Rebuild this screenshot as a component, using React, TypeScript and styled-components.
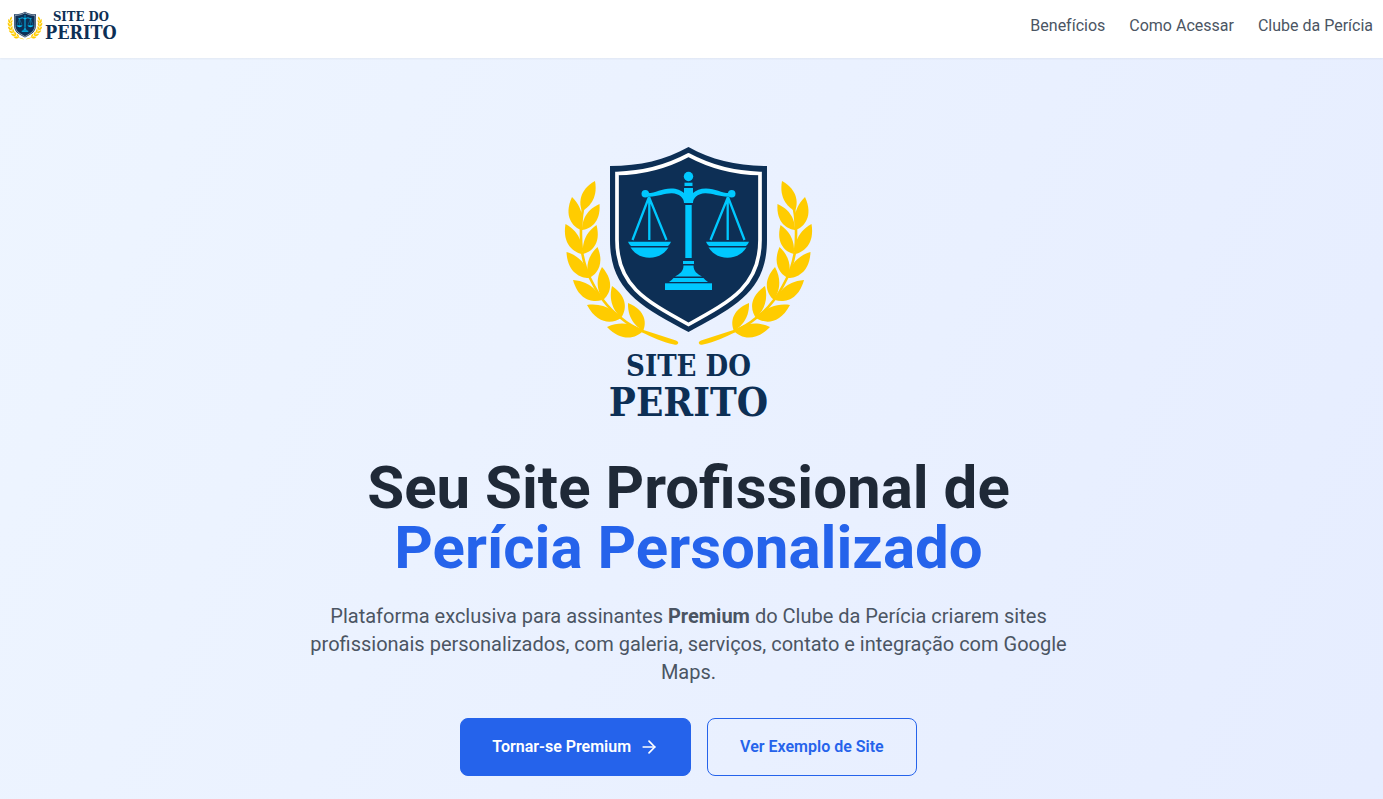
import React from "react";
import styled, { createGlobalStyle } from "styled-components";
import { ArrowRight } from "lucide-react";

const NAVY = "#0d2f55";
const CYAN = "#00c8ff";
const GOLD = "#ffcc00";

const GlobalStyle = createGlobalStyle`
  *, *::before, *::after { box-sizing: border-box; }
  body {
    margin: 0;
    font-family: Roboto, "Liberation Sans", sans-serif;
    font-size: 16px;
    line-height: 24px;
    color: #1f2937;
  }
  h1, p { margin: 0; }
`;

const Page = styled.div`
  min-height: 100vh;
  display: flex;
  flex-direction: column;
`;

const Header = styled.header`
  display: flex;
  align-items: center;
  justify-content: space-between;
  padding: 8px 10px 14px 7px;
  background: #ffffff;
  box-shadow: 0 1px 2px rgba(0, 0, 0, 0.05);
  z-index: 1;
`;

const Brand = styled.a<{ $stacked?: boolean }>`
  display: flex;
  flex-direction: ${(p) => (p.$stacked ? "column" : "row")};
  align-items: center;
  gap: ${(p) => (p.$stacked ? "0" : "2px")};
  color: ${NAVY};
  text-decoration: none;
`;

const Emblem = styled.svg<{ $width: number }>`
  display: block;
  width: ${(p) => p.$width}px;
  height: auto;
`;

const Wordmark = styled.span<{ $large?: boolean }>`
  display: flex;
  flex-direction: column;
  align-items: center;
  padding-bottom: ${(p) => (p.$large ? 0 : 2)}px;
  font-family: "DejaVu Serif Condensed", "Liberation Serif", serif;
  font-weight: 700;
  font-size: ${(p) => (p.$large ? 29 : 13)}px;
  line-height: ${(p) => (p.$large ? 32 : 16)}px;
`;

const WordmarkMain = styled.span<{ $large?: boolean }>`
  font-size: ${(p) => (p.$large ? 40 : 18)}px;
  line-height: ${(p) => (p.$large ? 40 : 16)}px;
`;

const Nav = styled.nav`
  display: flex;
  gap: 24px;
`;

const NavLink = styled.a`
  height: 36px;
  line-height: 36px;
  color: #4b5563;
  text-decoration: none;
`;

const Hero = styled.main`
  flex: 1;
  display: flex;
  flex-direction: column;
  align-items: center;
  padding: 84px 22px 16px 16px;
  text-align: center;
  background: linear-gradient(to bottom right, #eef5ff, #e1e8ff) 0 0 / 100% 3000px no-repeat;
`;

const Title = styled.h1`
  margin-top: 36px;
  font-size: 60px;
  line-height: 60px;
  font-weight: 700;
`;

const Accent = styled.span`
  display: block;
  color: #2563eb;
`;

const Lead = styled.p`
  max-width: 768px;
  margin-top: 24px;
  font-size: 20px;
  line-height: 28px;
  color: #4b5563;
`;

const Actions = styled.div`
  display: flex;
  flex-wrap: wrap;
  justify-content: center;
  gap: 16px;
  margin-top: 32px;
`;

const Button = styled.button<{ $outline?: boolean }>`
  display: inline-flex;
  align-items: center;
  gap: 8px;
  height: 58px;
  padding: 0 ${(p) => (p.$outline ? 32 : 31)}px;
  font: inherit;
  font-weight: 600;
  border: 1px solid #2563eb;
  border-radius: 8px;
  cursor: pointer;
  color: ${(p) => (p.$outline ? "#2563eb" : "#ffffff")};
  background: ${(p) => (p.$outline ? "transparent" : "#2563eb")};
`;

/* bend > 0 bulges the leaf to the right of its base-to-tip axis */
type Leaf = [baseX: number, baseY: number, tipX: number, tipY: number, bend: number];

const LEAVES: Leaf[] = [
  [582, 211, 595, 181, -0.02],
  [581, 230, 572, 197, -0.06],
  [582, 230, 599.5, 204, 0.04],
  [582, 254, 565.5, 224, -0.04],
  [583, 254, 596.5, 225, 0.06],
  [589, 278, 566.5, 252, -0.04],
  [589, 278, 597.5, 247, 0.04],
  [602, 300, 573, 280, -0.06],
  [603, 300, 602, 267, 0.06],
  [621, 318, 587, 305, -0.08],
  [621, 318, 612, 286, 0.06],
  [643, 331, 607, 327, -0.06],
  [643, 331, 628, 303, 0.06],
];

function leafPath([bx, by, tx, ty, bend]: Leaf): string {
  const dx = tx - bx;
  const dy = ty - by;
  const at = (along: number, side: number) =>
    `${(bx + dx * along - dy * side).toFixed(1)} ${(by + dy * along + dx * side).toFixed(1)}`;
  return [
    `M${bx} ${by}`,
    `C${at(0.15, 0.14 + bend)} ${at(0.52, 0.34 + bend)} ${tx} ${ty}`,
    `C${at(0.52, -0.34 + bend)} ${at(0.15, -0.14 + bend)} ${bx} ${by}Z`,
  ].join("");
}

function Branch() {
  return (
    <g fill={GOLD}>
      {LEAVES.map((leaf) => (
        <path key={leaf.join()} d={leafPath(leaf)} />
      ))}
      <path
        d="M584 205C581 216 580 236 582 252C584 263 586 270 590 278C594 286 598 294 603 300C609 308 614 313 621 318C628 324 635 328 643 331"
        fill="none"
        stroke={GOLD}
        strokeWidth="2.6"
      />
      <path d="M642 329.500L676 340.500Q679 342 678 343.500Q677 345.500 674 344.500C662 342 652 337 641 332Z" />
    </g>
  );
}

function ScaleArm() {
  return (
    <g fill={CYAN}>
      <circle cx="645.300" cy="193.700" r="3.800" />
      <path d="M646 193C654 194 661 188.500 671 188.500C677 188.500 681 190.500 684 193H689V203H684C684 198 679 193.500 672 193.300C664 193 657 197.500 646 196.500Z" />
      <path d="M649 197L632.500 240M649 197L666.500 240M649.300 197V240" fill="none" stroke={CYAN} strokeWidth="2.300" />
      <path d="M628 241.700H671Q670 244.500 668 246H631Q629 244.500 628 241.700Z" />
      <path d="M630.500 247.500H668.500C664 254.500 657 257.700 649.500 257.700S635 254.500 630.500 247.500Z" />
    </g>
  );
}

function EmblemArt({ width }: { width: number }) {
  const mirror = "translate(1377 0) scale(-1 1)";
  return (
    <Emblem $width={width} viewBox="560 142 257 208" aria-hidden="true">
      <path
        fill={NAVY}
        d="M688.500 147C665 160 640 166 610 166V240C610 290 640 306 688.500 332C737 306 767 290 767 240V166C737 166 712 160 688.500 147Z"
      />
      <path
        fill="none"
        stroke="#ffffff"
        strokeWidth="3.700"
        d="M688.500 155C666 167 643 173 617 173.500V240C617 285 644 300 688.500 324.500C733 300 760 285 760 240V173.500C734 173 711 167 688.500 155Z"
      />
      <Branch />
      <g transform={mirror}>
        <Branch />
      </g>
      <ScaleArm />
      <g transform={mirror}>
        <ScaleArm />
      </g>
      <g fill={CYAN}>
        <circle cx="688.500" cy="176.500" r="4.700" />
        <rect x="684.500" y="182.700" width="8" height="3.300" />
        <rect x="684" y="188" width="9" height="14.500" />
        <rect x="685.300" y="205" width="6.400" height="53" />
        <rect x="683" y="261" width="11" height="3" />
        <path d="M683.500 265.500H693.500C693.500 271 697 274 702 276.500H675C680 274 683.500 271 683.500 265.500Z" />
        <path d="M673.500 278H703.500Q705 280 708 282H669Q672 280 673.500 278Z" />
        <rect x="665" y="283.300" width="47" height="6.700" />
      </g>
    </Emblem>
  );
}

function Logo({ large }: { large?: boolean }) {
  return (
    <Brand href="#" $stacked={large}>
      <EmblemArt width={large ? 257 : 36} />
      <Wordmark $large={large}>
        <span>SITE DO</span>
        <WordmarkMain $large={large}>PERITO</WordmarkMain>
      </Wordmark>
    </Brand>
  );
}

export default function App() {
  return (
    <Page>
      <GlobalStyle />
      <Header>
        <Logo />
        <Nav>
          <NavLink href="#beneficios">Benefícios</NavLink>
          <NavLink href="#como-acessar">Como Acessar</NavLink>
          <NavLink href="#clube">Clube da Perícia</NavLink>
        </Nav>
      </Header>
      <Hero>
        <Logo large />
        <Title>
          Seu Site Profissional de <Accent>Perícia Personalizado</Accent>
        </Title>
        <Lead>
          Plataforma exclusiva para assinantes <strong>Premium</strong> do Clube da Perícia criarem sites
          profissionais personalizados, com galeria, serviços, contato e integração com Google Maps.
        </Lead>
        <Actions>
          <Button type="button">
            Tornar-se Premium
            <ArrowRight size={20} aria-hidden="true" />
          </Button>
          <Button type="button" $outline>
            Ver Exemplo de Site
          </Button>
        </Actions>
      </Hero>
    </Page>
  );
}
